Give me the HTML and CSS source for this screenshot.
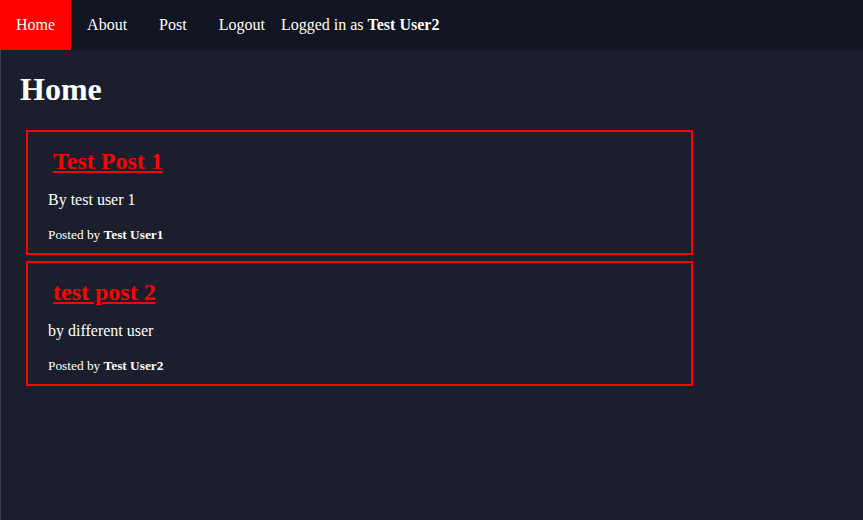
FILE: index.html
```html
<!DOCTYPE html>
<html lang="en">
<head>
<meta charset="utf-8">
<title>Home</title>
<link rel="stylesheet" href="styles.css">
</head>
<body>
<nav class="nav">
  <a class="nav-link active" href="#">Home</a>
  <a class="nav-link" href="#">About</a>
  <a class="nav-link" href="#">Post</a>
  <a class="nav-link" href="#">Logout</a>
  <span class="nav-user">Logged in as <b>Test User2</b></span>
</nav>
<main class="main">
  <h1 class="page-title">Home</h1>
  <div class="posts">
    <article class="post">
      <h2 class="post-title"><a href="#">Test Post 1</a></h2>
      <p class="post-body">By test user 1</p>
      <p class="post-meta">Posted by <b>Test User1</b></p>
    </article>
    <article class="post">
      <h2 class="post-title"><a href="#">test post 2</a></h2>
      <p class="post-body">by different user</p>
      <p class="post-meta">Posted by <b>Test User2</b></p>
    </article>
  </div>
</main>
</body>
</html>
```
FILE: styles.css
```css
html, body {
  margin: 0;
  padding: 0;
  height: 100%;
}
body {
  font-family: "Liberation Serif", "Times New Roman", serif;
  background: #1b1f2d;
  color: #ffffff;
  display: flex;
  flex-direction: column;
}
.nav {
  display: flex;
  align-items: center;
  background: #111521;
  height: 50px;
  flex: none;
}
.nav-link {
  color: #ffffff;
  text-decoration: none;
  font-size: 16px;
  line-height: 18px;
  padding: 16px;
}
.nav-link.active {
  background: #ff0000;
}
.nav-user {
  font-size: 16px;
  line-height: 18px;
}
.main {
  flex: 1;
  border-left: 1px solid #3d404b;
  padding: 21px 0 0 19px;
}
.page-title {
  font-size: 32px;
  font-weight: bold;
  margin: 0;
  line-height: 37px;
}
.posts {
  display: flex;
  flex-direction: column;
  gap: 6px;
  margin: 22px 0 0 6px;
  width: 667px;
}
.post {
  border: 2px solid #ff0000;
  padding: 0 20px 10px 20px;
  height: 125px;
  box-sizing: border-box;
}
.post-title {
  font-size: 24px;
  font-weight: bold;
  margin: 16px 0 0 5px;
  line-height: 27.6px;
}
.post-title a {
  color: #ff0000;
  text-decoration: underline;
}
.post-body {
  font-size: 16px;
  line-height: 18.4px;
  margin: 15px 0 0 0;
}
.post-meta {
  font-size: 13.333px;
  line-height: 15.33px;
  margin: 18px 0 0 0;
}
```
